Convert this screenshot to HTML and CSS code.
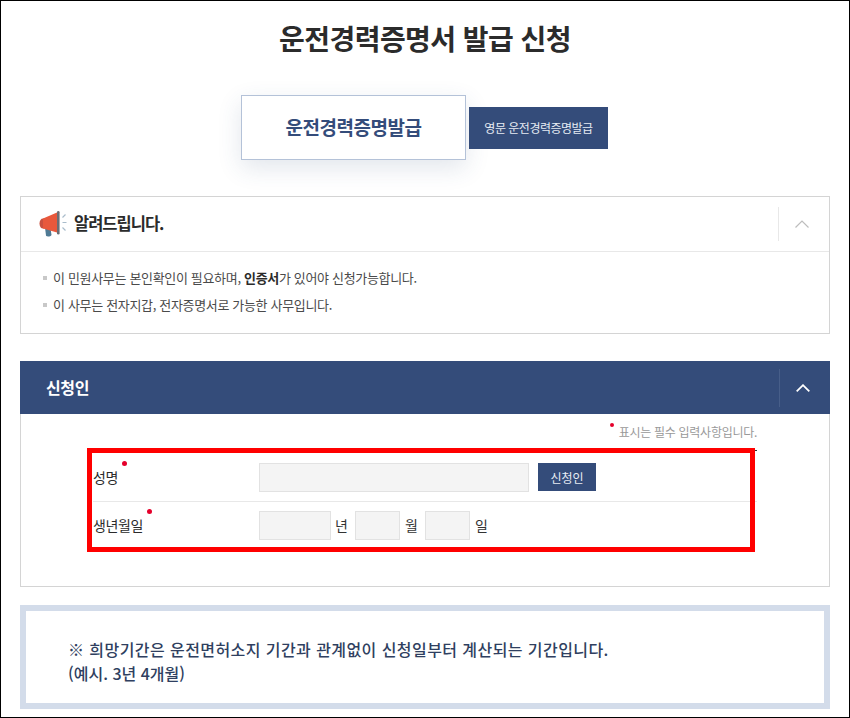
FILE: index.html
```html
<!DOCTYPE html>
<html lang="ko">
<head>
<meta charset="utf-8">
<title>운전경력증명서 발급 신청</title>
<link rel="stylesheet" href="styles.css">
</head>
<body>
<div class="frame">
  <h1 class="title">운전경력증명서 발급 신청</h1>
  <div class="tabs">
    <div class="tab-active">운전경력증명발급</div>
    <div class="tab-btn">영문 운전경력증명발급</div>
  </div>

  <section class="notice">
    <div class="notice-head">
      <svg class="mega" width="28" height="26" viewBox="0 0 28 26">
        <path d="M6 16 L11.5 17 L12.5 24 C11.5 25.8 8 26 7 24.8Z" fill="#4f7a94"/>
        <path d="M0.5 12.5 C0.5 9.5 2 7.5 4 7.5 L5 7.5 L5 17.5 L4 17.5 C2 17.5 0.5 15.5 0.5 12.5Z" fill="#c9503f"/>
        <path d="M4 7.5 L18 1.5 L18 21.5 L4 17.5Z" fill="#e8583c"/>
        <rect x="18" y="0" width="2.6" height="23.5" rx="1.3" fill="#6a6d74"/>
        <path d="M23.5 6.5 L26.5 3.5 M23.5 11.5 L27.5 11.5 M23.5 16.5 L26.5 19.5" stroke="#a9bccb" stroke-width="1.2" fill="none"/>
      </svg>
      <strong class="notice-title">알려드립니다.</strong>
      <div class="toggle">
        <svg width="14" height="8" viewBox="0 0 14 8"><path d="M0.5 7.5 L7 1 L13.5 7.5" fill="none" stroke="#bdbdbd" stroke-width="1.2"/></svg>
      </div>
    </div>
    <ul class="notice-list">
      <li>이 민원사무는 본인확인이 필요하며, <b>인증서</b>가 있어야 신청가능합니다.</li>
      <li>이 사무는 전자지갑, 전자증명서로 가능한 사무입니다.</li>
    </ul>
  </section>

  <section class="applicant">
    <div class="applicant-head">
      <strong class="applicant-title">신청인</strong>
      <div class="toggle-dark">
        <svg width="14" height="8" viewBox="0 0 14 8"><path d="M0.7 7.3 L7 1.2 L13.3 7.3" fill="none" stroke="#ffffff" stroke-width="1.8"/></svg>
      </div>
    </div>
    <div class="applicant-body">
      <p class="req-note"><span class="req">표시는 필수 입력사항입니다.</span></p>
      <div class="form">
        <div class="row row-name">
          <div class="label"><span class="req-label">성명</span></div>
          <div class="field">
            <span class="input w270"></span>
            <span class="mini-btn">신청인</span>
          </div>
        </div>
        <div class="row row-birth">
          <div class="label"><span class="req-label">생년월일</span></div>
          <div class="field">
            <span class="input w72"></span><span class="unit unit-year">년</span>
            <span class="input w46"></span><span class="unit">월</span>
            <span class="input w46"></span><span class="unit">일</span>
          </div>
        </div>
        <div class="highlight"></div>
      </div>
    </div>
  </section>

  <section class="hint">
    <p>※ 희망기간은 운전면허소지 기간과 관계없이 신청일부터 계산되는 기간입니다.</p>
    <p class="hint-example">(예시. 3년 4개월)</p>
  </section>
</div>
</body>
</html>
```

FILE: styles.css
```css
* { box-sizing: border-box; }
html, body { margin: 0; padding: 0; background: #fff; }
body {
  font-family: "Noto Sans CJK KR", "Noto Sans", sans-serif;
  color: #333;
}
p, ul, h1 { margin: 0; padding: 0; }
.frame {
  width: 850px;
  height: 718px;
  border: 1px solid #000;
  padding: 0 19px;
  overflow: hidden;
}
.title {
  height: 74px;
  line-height: 74px;
  text-align: center;
  font-size: 28px;
  font-weight: 700;
  color: #2b2b2b;
  letter-spacing: -0.55px;
}
.tabs {
  margin-top: 20px;
  padding-left: 221px;
  display: flex;
  align-items: center;
  gap: 3px;
}
.tab-active {
  width: 225px;
  height: 65px;
  padding-bottom: 2px;
  border: 1px solid #b4c2d8;
  background: #fff;
  box-shadow: 0 8px 24px rgba(52, 76, 122, 0.14);
  display: flex;
  align-items: center;
  justify-content: center;
  font-size: 19px;
  font-weight: 700;
  color: #344c7a;
  letter-spacing: -0.45px;
}
.tab-btn {
  width: 139px;
  height: 42px;
  background: #344c7a;
  color: #e6ebf3;
  display: flex;
  align-items: center;
  justify-content: center;
  font-size: 12px;
  letter-spacing: -0.5px;
}
.notice {
  margin-top: 36px;
  height: 138px;
  border: 1px solid #d4d4d4;
}
.notice-head {
  height: 55px;
  border-bottom: 1px solid #e8e8e8;
  display: flex;
  align-items: center;
  padding-left: 18px;
}
.mega { flex: none; }
.notice-title {
  margin-left: 7px;
  margin-bottom: 2px;
  font-size: 16.5px;
  font-weight: 700;
  color: #2b2b2b;
  letter-spacing: -1px;
}
.toggle {
  margin-left: auto;
  width: 51px;
  height: 34px;
  border-left: 1px solid #e8e8e8;
  display: flex;
  align-items: center;
  padding-left: 16px;
}
.notice-list {
  list-style: none;
  padding: 12px 0 0 22px;
  font-size: 13px;
  line-height: 27px;
  color: #4a4a4a;
  letter-spacing: -0.33px;
}
.notice-list li {
  white-space: pre-wrap;
  position: relative;
  padding-left: 10px;
}
.notice-list li::before {
  content: "";
  position: absolute;
  left: 0;
  top: 12px;
  width: 4px;
  height: 4px;
  background: #c8c8c8;
}
.notice-list b { font-weight: 700; color: #2b2b2b; }
.applicant { margin-top: 27px; }
.applicant-head {
  height: 53px;
  background: #344c7a;
  display: flex;
  align-items: center;
  padding-left: 26px;
}
.applicant-title {
  margin-bottom: 2px;
  font-size: 16px;
  font-weight: 700;
  color: #fff;
  letter-spacing: -0.4px;
}
.toggle-dark {
  margin-left: auto;
  width: 51px;
  height: 38px;
  border-left: 1px solid #475e89;
  display: flex;
  align-items: center;
  padding-left: 16px;
}
.applicant-body {
  height: 173px;
  border: 1px solid #d4d4d4;
  border-top: 0;
  padding: 0 72px 0 72px;
}
.req-note {
  height: 36px;
  padding-top: 9px;
  text-align: right;
  font-size: 12px;
  line-height: 17px;
  color: #999;
  letter-spacing: -0.28px;
}
.req { position: relative; }
.req::before {
  content: "";
  position: absolute;
  left: -9px;
  top: 0;
  width: 4px;
  height: 4px;
  border-radius: 50%;
  background: #e5002b;
}
.form {
  position: relative;
  border-top: 1px solid #333;
}
.row { display: flex; align-items: center; }
.row-name {
  height: 51px;
  padding-top: 2px;
  border-bottom: 1px solid #e8e8e8;
}
.row-birth { height: 46px; }
.label {
  width: 166px;
  margin-bottom: 1px;
  font-size: 14px;
  color: #2b2b2b;
  letter-spacing: -0.4px;
}
.req-label { position: relative; }
.req-label::after {
  content: "";
  position: absolute;
  right: -9px;
  top: -6px;
  width: 5px;
  height: 5px;
  border-radius: 50%;
  background: #e5002b;
}
.field {
  display: flex;
  align-items: center;
  font-size: 14px;
  color: #333;
}
.input {
  display: block;
  height: 29px;
  border: 1px solid #e2e2e2;
  background: #f4f4f4;
}
.w270 { width: 270px; }
.w72 { width: 72px; }
.w46 { width: 45px; }
.unit { width: 25px; padding-left: 5px; }
.unit-year { width: 24px; padding-left: 4px; }
.mini-btn {
  margin-left: 9px;
  width: 58px;
  height: 28px;
  background: #344c7a;
  color: #e8ecf4;
  display: flex;
  align-items: center;
  justify-content: center;
  font-size: 12px;
}
.highlight {
  position: absolute;
  left: -6px;
  top: -3px;
  width: 668px;
  height: 104px;
  border: 5px solid #ff0000;
  pointer-events: none;
}
.hint {
  margin-top: 18px;
  height: 104px;
  border: 6px solid #d3dcea;
  padding: 26px 0 0 42px;
  font-size: 16px;
  font-weight: 500;
  line-height: 24px;
  color: #2f3f60;
  letter-spacing: 0.43px;
}
.hint-example { letter-spacing: 0; }
```
